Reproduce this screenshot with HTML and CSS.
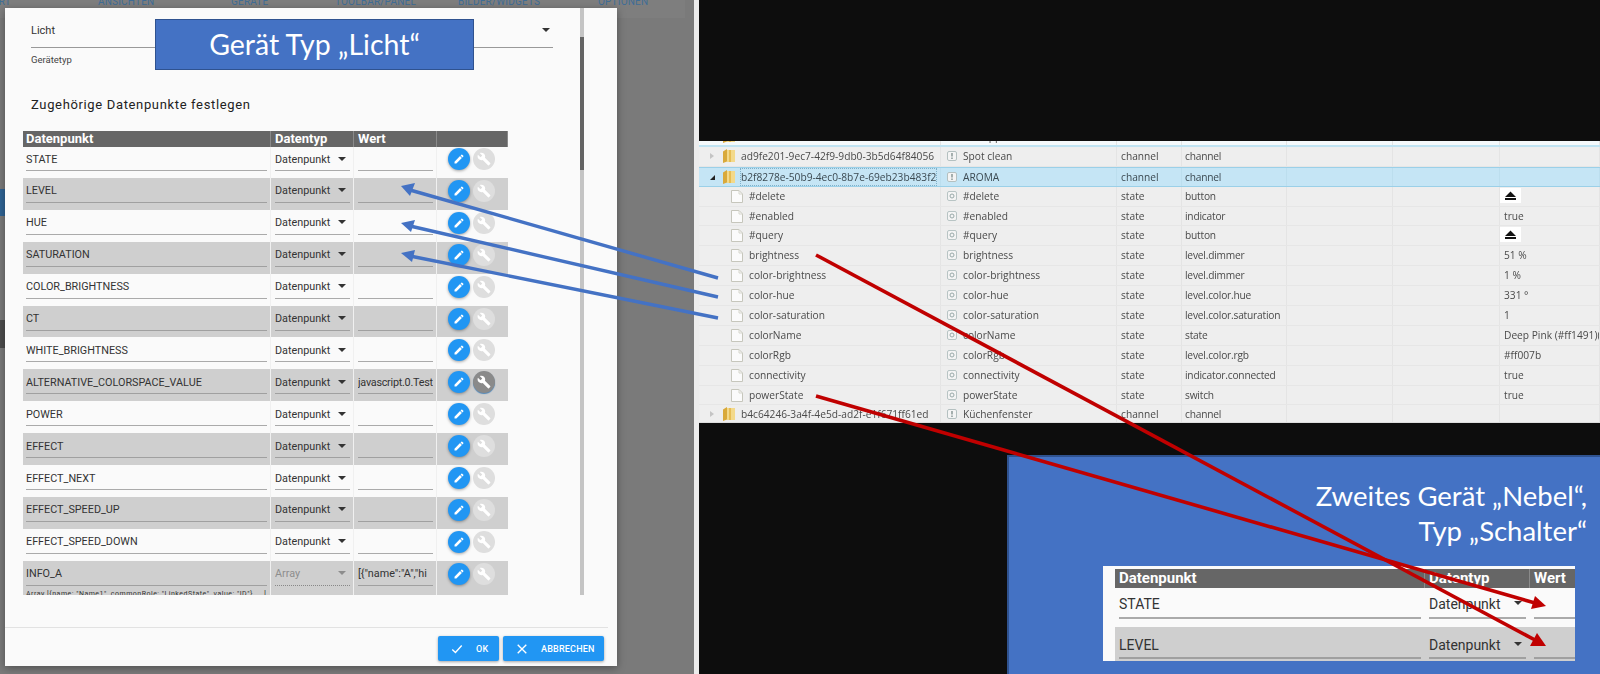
FILE: index.html
```html
<!DOCTYPE html>
<html lang="de">
  <head>
    <meta charset="UTF-8" />
    <meta name="viewport" content="width=device-width, initial-scale=1.0" />
    <title>Gerät Typ Licht</title>
    <link rel="stylesheet" href="styles.css">
  </head>
  <body>
    <svg class="defs" width="0" height="0">
      <symbol id="pen" viewBox="0 0 24 24"><path d="M3 17.25V21h3.75L17.81 9.94l-3.75-3.75L3 17.25zM20.71 7.04c.39-.39.39-1.02 0-1.41l-2.34-2.34c-.39-.39-1.02-.39-1.41 0l-1.83 1.83 3.75 3.75 1.83-1.83z"/></symbol>
      <symbol id="wrench" viewBox="0 0 24 24"><path d="M22.7 19l-9.1-9.1c.9-2.3.4-5-1.5-6.9-2-2-5-2.4-7.4-1.3L9 6 6 9 1.6 4.7C.4 7.1.9 10.1 2.9 12.1c1.9 1.9 4.6 2.4 6.9 1.5l9.1 9.1c.4.4 1 .4 1.4 0l2.3-2.3c.5-.4.5-1.1.1-1.4z"/></symbol>
      <symbol id="folder" viewBox="0 0 12 14"><path d="M0 2.5 4 0v12.5L0 14z" fill="#d9a93a"/><path d="M4 1h8v12H4z" fill="#f3d98a"/><path d="M6 1h2v12H6z" fill="#e6bd55"/></symbol>
      <symbol id="doc" viewBox="0 0 12 13"><path d="M.5.5h7.5l3.5 3.5v8.5H.5z" fill="#fbfbfb" stroke="#c6c6bc"/><path d="M8 .5V4h3.5" fill="none" stroke="#d6d6cc"/></symbol>
      <symbol id="chan" viewBox="0 0 10 10"><rect x=".5" y=".5" width="9" height="9" rx="1.5" fill="#f4f4f4" stroke="#b4c0c0"/><path d="M4.4 2h1.2v3.6H4.4zM4.4 6.6h1.2v1.3H4.4z" fill="#70807f"/></symbol>
      <symbol id="stat" viewBox="0 0 10 10"><rect x=".5" y=".5" width="9" height="9" rx="1.5" fill="#f4f4f4" stroke="#b8c4c4"/><circle cx="5" cy="5" r="2" fill="none" stroke="#98a8a8"/></symbol>
      <symbol id="eject" viewBox="0 0 21 15"><rect width="21" height="15" fill="#fff"/><path d="M10.5 3.5 16 9H5zM5 10h11v2H5z" fill="#111"/></symbol>
    </svg>

    <div class="stage">
      <div class="app">
        <nav class="app-bar">
          <span class="tab tab-art">ART</span>
          <span class="tab tab-ansichten">ANSICHTEN</span>
          <span class="tab tab-geraete">GERÄTE</span>
          <span class="tab tab-toolbar">TOOLBAR/PANEL</span>
          <span class="tab tab-bilder">BILDER/WIDGETS</span>
          <span class="tab tab-optionen">OPTIONEN</span>
        </nav>
        <div class="side-blue"></div>
        <div class="side-dark"></div>

        <div class="dialog">
          <div class="dialog-body">
            <div class="dialog-content">
              <div class="type-select">
                <span>Licht</span>
                <i class="caret"></i>
              </div>
              <div class="type-label">Gerätetyp</div>
              <h2 class="section-title">Zugehörige Datenpunkte festlegen</h2>

              <div class="dp-table">
                <div class="dp-row dp-head">
                  <div>Datenpunkt</div>
                  <div>Datentyp</div>
                  <div>Wert</div>
                  <div></div>
                </div>

                <div class="dp-row">
                  <div><div class="field">STATE</div></div>
                  <div><div class="field">Datenpunkt<i class="caret"></i></div></div>
                  <div><div class="field"></div></div>
                  <div class="dp-actions"><span class="btn-round"><svg><use href="#pen"/></svg></span><span class="btn-round off"><svg><use href="#wrench"/></svg></span></div>
                </div>
                <div class="dp-row alt">
                  <div><div class="field">LEVEL</div></div>
                  <div><div class="field">Datenpunkt<i class="caret"></i></div></div>
                  <div><div class="field"></div></div>
                  <div class="dp-actions"><span class="btn-round"><svg><use href="#pen"/></svg></span><span class="btn-round off"><svg><use href="#wrench"/></svg></span></div>
                </div>
                <div class="dp-row">
                  <div><div class="field">HUE</div></div>
                  <div><div class="field">Datenpunkt<i class="caret"></i></div></div>
                  <div><div class="field"></div></div>
                  <div class="dp-actions"><span class="btn-round"><svg><use href="#pen"/></svg></span><span class="btn-round off"><svg><use href="#wrench"/></svg></span></div>
                </div>
                <div class="dp-row alt">
                  <div><div class="field">SATURATION</div></div>
                  <div><div class="field">Datenpunkt<i class="caret"></i></div></div>
                  <div><div class="field"></div></div>
                  <div class="dp-actions"><span class="btn-round"><svg><use href="#pen"/></svg></span><span class="btn-round off"><svg><use href="#wrench"/></svg></span></div>
                </div>
                <div class="dp-row">
                  <div><div class="field">COLOR_BRIGHTNESS</div></div>
                  <div><div class="field">Datenpunkt<i class="caret"></i></div></div>
                  <div><div class="field"></div></div>
                  <div class="dp-actions"><span class="btn-round"><svg><use href="#pen"/></svg></span><span class="btn-round off"><svg><use href="#wrench"/></svg></span></div>
                </div>
                <div class="dp-row alt">
                  <div><div class="field">CT</div></div>
                  <div><div class="field">Datenpunkt<i class="caret"></i></div></div>
                  <div><div class="field"></div></div>
                  <div class="dp-actions"><span class="btn-round"><svg><use href="#pen"/></svg></span><span class="btn-round off"><svg><use href="#wrench"/></svg></span></div>
                </div>
                <div class="dp-row">
                  <div><div class="field">WHITE_BRIGHTNESS</div></div>
                  <div><div class="field">Datenpunkt<i class="caret"></i></div></div>
                  <div><div class="field"></div></div>
                  <div class="dp-actions"><span class="btn-round"><svg><use href="#pen"/></svg></span><span class="btn-round off"><svg><use href="#wrench"/></svg></span></div>
                </div>
                <div class="dp-row alt">
                  <div><div class="field">ALTERNATIVE_COLORSPACE_VALUE</div></div>
                  <div><div class="field">Datenpunkt<i class="caret"></i></div></div>
                  <div><div class="field tight">javascript.0.Test</div></div>
                  <div class="dp-actions"><span class="btn-round"><svg><use href="#pen"/></svg></span><span class="btn-round set"><svg><use href="#wrench"/></svg></span></div>
                </div>
                <div class="dp-row">
                  <div><div class="field">POWER</div></div>
                  <div><div class="field">Datenpunkt<i class="caret"></i></div></div>
                  <div><div class="field"></div></div>
                  <div class="dp-actions"><span class="btn-round"><svg><use href="#pen"/></svg></span><span class="btn-round off"><svg><use href="#wrench"/></svg></span></div>
                </div>
                <div class="dp-row alt">
                  <div><div class="field">EFFECT</div></div>
                  <div><div class="field">Datenpunkt<i class="caret"></i></div></div>
                  <div><div class="field"></div></div>
                  <div class="dp-actions"><span class="btn-round"><svg><use href="#pen"/></svg></span><span class="btn-round off"><svg><use href="#wrench"/></svg></span></div>
                </div>
                <div class="dp-row">
                  <div><div class="field">EFFECT_NEXT</div></div>
                  <div><div class="field">Datenpunkt<i class="caret"></i></div></div>
                  <div><div class="field"></div></div>
                  <div class="dp-actions"><span class="btn-round"><svg><use href="#pen"/></svg></span><span class="btn-round off"><svg><use href="#wrench"/></svg></span></div>
                </div>
                <div class="dp-row alt">
                  <div><div class="field">EFFECT_SPEED_UP</div></div>
                  <div><div class="field">Datenpunkt<i class="caret"></i></div></div>
                  <div><div class="field"></div></div>
                  <div class="dp-actions"><span class="btn-round"><svg><use href="#pen"/></svg></span><span class="btn-round off"><svg><use href="#wrench"/></svg></span></div>
                </div>
                <div class="dp-row">
                  <div><div class="field">EFFECT_SPEED_DOWN</div></div>
                  <div><div class="field">Datenpunkt<i class="caret"></i></div></div>
                  <div><div class="field"></div></div>
                  <div class="dp-actions"><span class="btn-round"><svg><use href="#pen"/></svg></span><span class="btn-round off"><svg><use href="#wrench"/></svg></span></div>
                </div>
                <div class="dp-row alt">
                  <div>
                    <div class="field">INFO_A</div>
                    <div class="field-help">Array [{name: "Name1", commonRole: "LinkedState", value: "ID"}, ...]</div>
                  </div>
                  <div><div class="field disabled">Array<i class="caret"></i></div></div>
                  <div><div class="field clip">[{"name":"A","hi</div></div>
                  <div class="dp-actions"><span class="btn-round"><svg><use href="#pen"/></svg></span><span class="btn-round off"><svg><use href="#wrench"/></svg></span></div>
                </div>
              </div>
            </div>
            <div class="scrollbar"><div class="scroll-thumb"></div></div>
          </div>

          <div class="dialog-footer">
            <button class="btn btn-ok">
              <svg viewBox="0 0 14 14"><path d="M1.5 7.5 5.2 11 12.5 3" fill="none" stroke="#fff" stroke-width="1.6"/></svg>
              OK
            </button>
            <button class="btn btn-cancel">
              <svg viewBox="0 0 14 14"><path d="M2 2l10 10M12 2 2 12" fill="none" stroke="#fff" stroke-width="1.6"/></svg>
              ABBRECHEN
            </button>
          </div>
        </div>

        <div class="callout">Gerät Typ „Licht“</div>
      </div>

      <div class="objects">
        <div class="obj-inner">
          <div class="obj-row cut">
            <div class="c-id depth1"><svg class="ic-folder"><use href="#folder"/></svg></div>
            <div class="c-name"><span class="cut-text">app</span></div>
            <div></div><div></div><div></div><div></div><div></div>
          </div>
          <div class="obj-row">
            <div class="c-id depth1"><i class="tw closed"></i><svg class="ic-folder"><use href="#folder"/></svg>ad9fe201-9ec7-42f9-9db0-3b5d64f84056</div>
            <div class="c-name"><svg class="ic"><use href="#chan"/></svg>Spot clean</div>
            <div>channel</div><div>channel</div><div></div><div></div><div></div>
          </div>
          <div class="obj-row selected">
            <div class="c-id depth1"><i class="tw open"></i><svg class="ic-folder"><use href="#folder"/></svg><span class="focus">b2f8278e-50b9-4ec0-8b7e-69eb23b483f2</span></div>
            <div class="c-name"><svg class="ic"><use href="#chan"/></svg>AROMA</div>
            <div>channel</div><div>channel</div><div></div><div></div><div></div>
          </div>
          <div class="obj-row">
            <div class="c-id depth2"><svg class="ic-doc"><use href="#doc"/></svg>#delete</div>
            <div class="c-name"><svg class="ic"><use href="#stat"/></svg>#delete</div>
            <div>state</div><div>button</div><div></div><div></div><div class="c-val"><svg class="ic-eject"><use href="#eject"/></svg></div>
          </div>
          <div class="obj-row">
            <div class="c-id depth2"><svg class="ic-doc"><use href="#doc"/></svg>#enabled</div>
            <div class="c-name"><svg class="ic"><use href="#stat"/></svg>#enabled</div>
            <div>state</div><div>indicator</div><div></div><div></div><div>true</div>
          </div>
          <div class="obj-row">
            <div class="c-id depth2"><svg class="ic-doc"><use href="#doc"/></svg>#query</div>
            <div class="c-name"><svg class="ic"><use href="#stat"/></svg>#query</div>
            <div>state</div><div>button</div><div></div><div></div><div class="c-val"><svg class="ic-eject"><use href="#eject"/></svg></div>
          </div>
          <div class="obj-row">
            <div class="c-id depth2"><svg class="ic-doc"><use href="#doc"/></svg>brightness</div>
            <div class="c-name"><svg class="ic"><use href="#stat"/></svg>brightness</div>
            <div>state</div><div>level.dimmer</div><div></div><div></div><div>51 %</div>
          </div>
          <div class="obj-row">
            <div class="c-id depth2"><svg class="ic-doc"><use href="#doc"/></svg>color-brightness</div>
            <div class="c-name"><svg class="ic"><use href="#stat"/></svg>color-brightness</div>
            <div>state</div><div>level.dimmer</div><div></div><div></div><div>1 %</div>
          </div>
          <div class="obj-row">
            <div class="c-id depth2"><svg class="ic-doc"><use href="#doc"/></svg>color-hue</div>
            <div class="c-name"><svg class="ic"><use href="#stat"/></svg>color-hue</div>
            <div>state</div><div>level.color.hue</div><div></div><div></div><div>331 °</div>
          </div>
          <div class="obj-row">
            <div class="c-id depth2"><svg class="ic-doc"><use href="#doc"/></svg>color-saturation</div>
            <div class="c-name"><svg class="ic"><use href="#stat"/></svg>color-saturation</div>
            <div>state</div><div>level.color.saturation</div><div></div><div></div><div>1</div>
          </div>
          <div class="obj-row">
            <div class="c-id depth2"><svg class="ic-doc"><use href="#doc"/></svg>colorName</div>
            <div class="c-name"><svg class="ic"><use href="#stat"/></svg>colorName</div>
            <div>state</div><div>state</div><div></div><div></div><div>Deep Pink (#ff1491)(4</div>
          </div>
          <div class="obj-row">
            <div class="c-id depth2"><svg class="ic-doc"><use href="#doc"/></svg>colorRgb</div>
            <div class="c-name"><svg class="ic"><use href="#stat"/></svg>colorRgb</div>
            <div>state</div><div>level.color.rgb</div><div></div><div></div><div>#ff007b</div>
          </div>
          <div class="obj-row">
            <div class="c-id depth2"><svg class="ic-doc"><use href="#doc"/></svg>connectivity</div>
            <div class="c-name"><svg class="ic"><use href="#stat"/></svg>connectivity</div>
            <div>state</div><div>indicator.connected</div><div></div><div></div><div>true</div>
          </div>
          <div class="obj-row">
            <div class="c-id depth2"><svg class="ic-doc"><use href="#doc"/></svg>powerState</div>
            <div class="c-name"><svg class="ic"><use href="#stat"/></svg>powerState</div>
            <div>state</div><div>switch</div><div></div><div></div><div>true</div>
          </div>
          <div class="obj-row">
            <div class="c-id depth1"><i class="tw closed"></i><svg class="ic-folder"><use href="#folder"/></svg>b4c64246-3a4f-4e5d-ad2f-e1f671ff61ed</div>
            <div class="c-name"><svg class="ic"><use href="#chan"/></svg>Küchenfenster</div>
            <div>channel</div><div>channel</div><div></div><div></div><div></div>
          </div>
        </div>
      </div>

      <div class="second">
        <div class="second-title">Zweites Gerät „Nebel“,<br>Typ „Schalter“</div>
        <div class="inset">
          <div class="in-row in-head">
            <div>Datenpunkt</div>
            <div>Datentyp</div>
            <div>Wert</div>
          </div>
          <div class="in-row">
            <div><div class="in-field">STATE</div></div>
            <div><div class="in-field">Datenpunkt<i class="caret"></i></div></div>
            <div><div class="in-field"></div></div>
          </div>
          <div class="in-row alt">
            <div><div class="in-field">LEVEL</div></div>
            <div><div class="in-field">Datenpunkt<i class="caret"></i></div></div>
            <div><div class="in-field"></div></div>
          </div>
        </div>
      </div>

      <svg class="arrows" width="1600" height="674">
        <g stroke="#4472c4" stroke-width="3.4" fill="#4472c4">
          <line x1="718" y1="278" x2="410" y2="190"/>
          <line x1="718" y1="297" x2="410" y2="226"/>
          <line x1="718" y1="318" x2="410" y2="256"/>
          <path stroke="none" d="M401 186 415 183 410 196z"/>
          <path stroke="none" d="M401 223 415 220 411 232z"/>
          <path stroke="none" d="M401 253 415 250 412 262z"/>
        </g>
        <g stroke="#c00000" stroke-width="3.6" fill="#c00000">
          <line x1="816" y1="255" x2="1535" y2="640"/>
          <line x1="816" y1="396" x2="1535" y2="603"/>
          <path stroke="none" d="M1546 646 1530 646 1537 633z"/>
          <path stroke="none" d="M1546 606 1531 609 1535 596z"/>
        </g>
      </svg>
    </div>
  </body>
</html>
```

FILE: styles.css
```css
* {
  margin: 0;
  padding: 0;
  box-sizing: border-box;
}
body {
  background: #0d0d0d;
  font-family: Roboto, "Liberation Sans", sans-serif;
  overflow: hidden;
}
.defs {
  position: absolute;
}
.stage {
  position: relative;
  width: 1600px;
  height: 674px;
  overflow: hidden;
  background: #0d0d0d;
}

/* left screenshot */
.app {
  position: absolute;
  left: 0;
  top: 0;
  width: 699px;
  height: 674px;
  background: #7a7a7a;
  border-right: 5px solid #ececec;
}
.app-bar {
  position: relative;
  height: 18px;
  width: 685px;
  background: #7e7e7e;
  overflow: hidden;
}
.tab {
  position: absolute;
  top: -4px;
  font-size: 10px;
  letter-spacing: 0.2px;
  color: #3f6d96;
}
.tab-art { left: -8px; }
.tab-ansichten { left: 98px; }
.tab-geraete { left: 231px; }
.tab-toolbar { left: 335px; }
.tab-bilder { left: 458px; }
.tab-optionen { left: 598px; }
.side-blue {
  position: absolute;
  left: 0;
  top: 189px;
  width: 5px;
  height: 27px;
  background: #2f6394;
}
.side-dark {
  position: absolute;
  left: 0;
  top: 320px;
  width: 5px;
  height: 28px;
  background: #4c4c4c;
}

.dialog {
  position: absolute;
  left: 5px;
  top: 8px;
  width: 612px;
  height: 658px;
  background: #fafafa;
  box-shadow: 0 2px 8px rgba(0, 0, 0, 0.35);
}
.dialog-body {
  display: flex;
  height: 587px;
}
.dialog-content {
  width: 575px;
  padding-left: 18px;
  overflow: hidden;
}
.scrollbar {
  width: 4px;
  background: #c4c4c4;
}
.scroll-thumb {
  height: 133px;
  margin-top: 29px;
  background: #646464;
}

.type-select {
  position: relative;
  margin: 8px 27px 0 8px;
  height: 32px;
  line-height: 30px;
  font-size: 11px;
  color: #333;
  border-bottom: 1px solid #999;
}
.type-select .caret {
  top: 12px;
  right: 3px;
}
.type-label {
  margin: 6px 0 0 8px;
  font-size: 9.5px;
  color: #444;
}
.section-title {
  margin: 30px 0 0 8px;
  font-size: 13px;
  line-height: 20px;
  font-weight: 400;
  letter-spacing: 0.65px;
  color: #222;
}

.caret {
  position: absolute;
  right: 4px;
  top: 9px;
  width: 0;
  height: 0;
  border-left: 4px solid transparent;
  border-right: 4px solid transparent;
  border-top: 4px solid #333;
}

.dp-table {
  width: 485px;
  margin-top: 16px;
}
.dp-row {
  display: grid;
  grid-template-columns: 248px 83px 83px 71px;
  height: 31.92px;
  font-size: 10.8px;
  color: #333;
}
.dp-row > div {
  padding: 1.5px 3px 0 4px;
  border-right: 1px solid #f0f0f0;
  overflow: hidden;
}
.dp-row > div:first-child {
  padding-left: 3px;
}
.dp-row > div:last-child {
  border-right: none;
}
.dp-head {
  height: 16px;
  background: #666;
  color: #fff;
  font-weight: 700;
  font-size: 13px;
  line-height: 16px;
  position: relative;
  margin-bottom: -1px;
}
.dp-row.dp-head > div {
  padding-top: 0;
  border-right: 1px solid #8a8a8a;
}
.alt {
  background: #cfcfcf;
}
.field {
  position: relative;
  height: 23.5px;
  line-height: 24px;
  border-bottom: 1.5px solid #aaa;
  white-space: nowrap;
  overflow: hidden;
}
.alt .field {
  border-bottom-color: #a0a0a0;
}
.field.tight {
  letter-spacing: -0.25px;
}
.field.disabled {
  color: #8d8d8d;
  border-bottom: 1px dotted #888;
}
.field.disabled .caret {
  border-top-color: #8d8d8d;
}
.field-help {
  margin-top: 4px;
  font-size: 7px;
  line-height: 9px;
  letter-spacing: 0.5px;
  white-space: nowrap;
  overflow: hidden;
}
.dp-table .dp-row:last-child {
  height: 35px;
}
.dp-row > .dp-actions {
  display: flex;
  gap: 3px;
  padding: 2px 0 0 11px;
}
.btn-round {
  display: flex;
  align-items: center;
  justify-content: center;
  width: 22px;
  height: 22px;
  border-radius: 50%;
  background: #2196f3;
  box-shadow: 0 1px 3px rgba(0, 0, 0, 0.35);
}
.btn-round svg {
  width: 12px;
  height: 12px;
  fill: #fff;
}
.btn-round.off {
  background: #dedede;
  box-shadow: none;
}
.btn-round.off svg,
.btn-round.set svg {
  width: 14px;
  height: 14px;
}
.btn-round.set {
  background: #8a8a8a;
  box-shadow: 0 1px 1px #4f86b8;
}

.dialog-footer {
  display: flex;
  justify-content: flex-end;
  gap: 4px;
  margin-top: 32px;
  width: 603px;
  height: 39px;
  padding: 8px 4px 0 0;
  border-top: 1px solid #e2e2e2;
}
.btn {
  display: flex;
  align-items: center;
  gap: 13px;
  height: 25px;
  padding: 0 0 0 13px;
  border: none;
  border-radius: 2px;
  background: #2196f3;
  color: #fff;
  font-family: Roboto, sans-serif;
  font-size: 9px;
  font-weight: 500;
  letter-spacing: 0.2px;
  box-shadow: 0 1px 3px rgba(0, 0, 0, 0.35);
}
.btn-ok {
  width: 61px;
}
.btn-cancel {
  width: 101px;
}
.btn svg {
  width: 12px;
  height: 12px;
}

.callout {
  position: absolute;
  left: 155px;
  top: 19px;
  width: 319px;
  height: 51px;
  line-height: 48px;
  text-align: center;
  background: #4472c4;
  border: 1.5px solid #2f528f;
  color: #fff;
  font-family: Lato, sans-serif;
  font-size: 28.5px;
}

/* object list screenshot */
.objects {
  position: absolute;
  left: 699px;
  top: 141px;
  width: 901px;
  height: 282px;
  overflow: hidden;
  background: #eee;
  border-bottom: 1px solid #ddd;
}
.obj-inner {
  filter: blur(0.35px);
}
.obj-row {
  display: grid;
  grid-template-columns: 242px 176px 65px 105px 106px 107px 100px;
  height: 19.9px;
  line-height: 19px;
  font-family: "Open Sans", sans-serif;
  font-size: 10.2px;
  color: #4a4a4a;
  border-bottom: 1px solid #e6e6e6;
}
.obj-row > div {
  padding-left: 4px;
  border-right: 1px solid #e4e4e4;
  white-space: nowrap;
  overflow: hidden;
}
.obj-row > div:nth-child(4) {
  padding-left: 3px;
  letter-spacing: -0.2px;
}
.obj-row > .c-id {
  position: relative;
  padding-left: 42px;
}
.obj-row > .c-id.depth2 {
  padding-left: 50px;
}
.obj-row > .c-name {
  position: relative;
  padding-left: 22px;
}
.obj-row > .c-val {
  padding-left: 0;
}
.cut {
  margin-top: -14px;
  background: #f4f9fb;
  border-bottom: 2px solid #bfe3f2;
}
.cut-text {
  padding-left: 20px;
}
.selected {
  background: #c5e5f5;
  border-top: 1px solid #9bd0e8;
  border-bottom: 1px solid #9bd0e8;
  color: #3c4a52;
}
.selected > div {
  border-right-color: #bcdeee;
}
.focus {
  display: inline-block;
  line-height: 16px;
  outline: 1px dotted #7fb0c8;
  outline-offset: 0;
}
.tw {
  position: absolute;
  left: 11px;
  top: 6px;
  width: 0;
  height: 0;
}
.tw.closed {
  border-top: 3.5px solid transparent;
  border-bottom: 3.5px solid transparent;
  border-left: 4px solid #c4c4c4;
}
.tw.open {
  top: 7px;
  border-left: 5px solid transparent;
  border-bottom: 5px solid #222;
}
.ic-folder {
  position: absolute;
  left: 24px;
  top: 2px;
  width: 12px;
  height: 14px;
}
.ic-doc {
  position: absolute;
  left: 32px;
  top: 3px;
  width: 12px;
  height: 13px;
}
.ic {
  position: absolute;
  left: 6px;
  top: 4px;
  width: 10px;
  height: 10px;
}
.ic-eject {
  display: block;
  width: 21px;
  height: 15px;
  margin-top: 1px;
}

/* second device panel */
.second {
  position: absolute;
  left: 1007px;
  top: 455px;
  width: 593px;
  height: 219px;
  background: #4472c4;
  border: 2px solid #2f528f;
  border-right: none;
  border-bottom: none;
}
.second-title {
  margin-top: 21px;
  padding-right: 13px;
  text-align: right;
  color: #fff;
  font-family: Lato, sans-serif;
  font-size: 27.5px;
  line-height: 35px;
}
.inset {
  position: absolute;
  left: 94px;
  top: 109px;
  width: 472px;
  height: 95px;
  padding-top: 3px;
  padding-left: 12px;
  background: #fafafa;
  overflow: hidden;
}
.in-row {
  display: grid;
  grid-template-columns: 310px 105px 50px;
  height: 39px;
  font-size: 14px;
  color: #333;
}
.in-row > div {
  padding: 0 4px;
  overflow: hidden;
}
.in-field {
  position: relative;
  height: 31px;
  line-height: 32px;
  border-bottom: 2px solid #aaa;
  white-space: nowrap;
}
.in-head {
  height: 19px;
  background: #666;
  color: #fff;
  font-weight: 700;
  font-size: 15px;
  line-height: 18px;
}
.in-head > div {
  border-right: 1px solid #8a8a8a;
}
.in-row.alt {
  height: 34px;
}
.in-row.alt .in-field {
  height: 32px;
  line-height: 36px;
  border-bottom-color: #a0a0a0;
}
.in-field .caret {
  right: 4px;
  top: 13px;
}
.in-row.alt .caret {
  top: 15px;
}

.arrows {
  position: absolute;
  left: 0;
  top: 0;
}
```
